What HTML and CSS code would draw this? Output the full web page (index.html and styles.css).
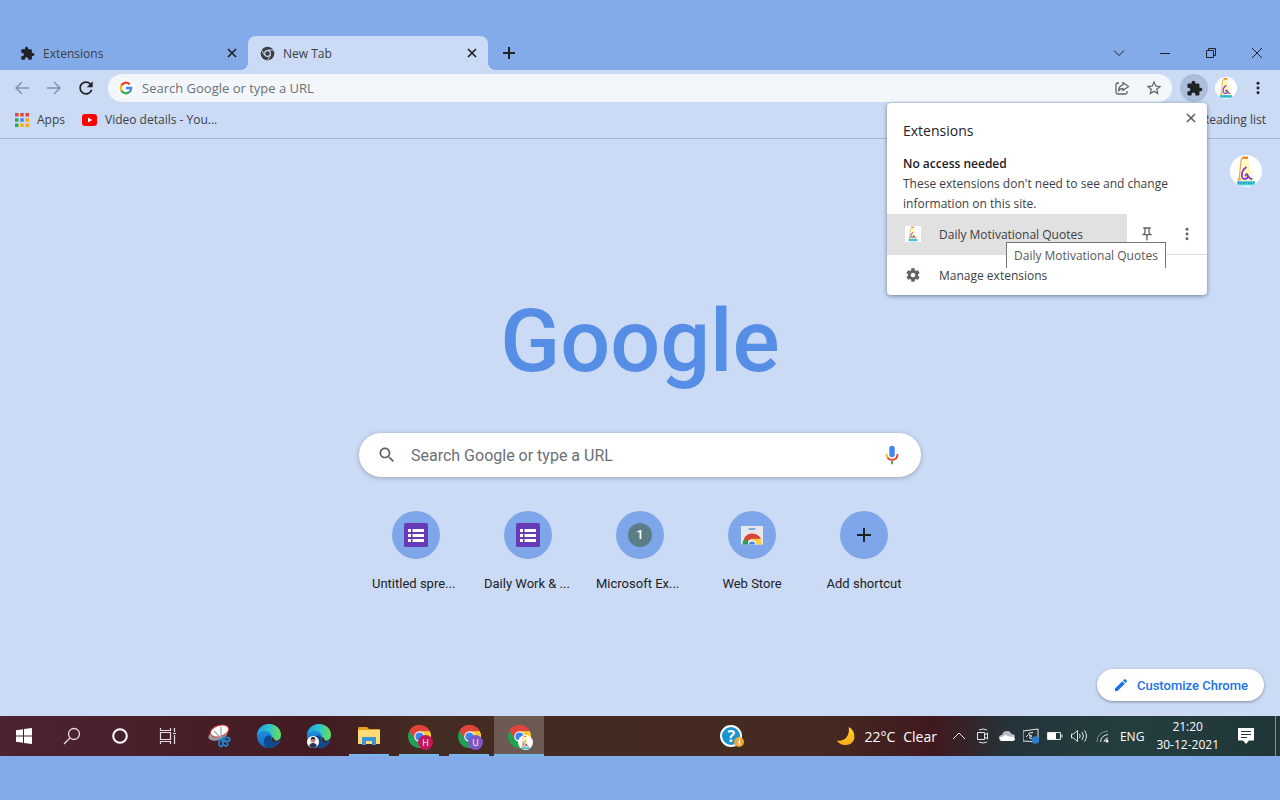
FILE: index.html
```html
<!DOCTYPE html>
<html lang="en">
<head>
    <meta charset="UTF-8">
    <meta name="viewport" content="width=device-width, initial-scale=1.0">
    <title>New Tab</title>
    <link rel="stylesheet" href="styles.css">
</head>
<body>
    <!-- Shared icons -->
    <svg class="sprite" width="0" height="0" aria-hidden="true">
        <defs>
            <linearGradient id="edgeTop" x1="0" y1="0" x2="1" y2="0">
                <stop offset="0" stop-color="#1a9fe0"/>
                <stop offset=".5" stop-color="#2fc3cf"/>
                <stop offset="1" stop-color="#6be04e"/>
            </linearGradient>
            <linearGradient id="edgeSide" x1="0" y1="0" x2="0" y2="1">
                <stop offset="0" stop-color="#2a9be8"/>
                <stop offset="1" stop-color="#0f6cc4"/>
            </linearGradient>
            <linearGradient id="moonFill" x1="0" y1="0" x2="0" y2="1">
                <stop offset="0" stop-color="#ffd91f"/>
                <stop offset="1" stop-color="#f9a91c"/>
            </linearGradient>
        </defs>
        <symbol id="puzzle" viewBox="0 0 24 24">
            <path d="M20.5 11H19V7c0-1.1-.9-2-2-2h-4V3.5C13 2.12 11.88 1 10.5 1S8 2.12 8 3.5V5H4c-1.1 0-1.99.9-1.99 2v3.8H3.5c1.49 0 2.7 1.21 2.7 2.7s-1.21 2.7-2.7 2.7H2V20c0 1.1.9 2 2 2h3.8v-1.5c0-1.49 1.21-2.7 2.7-2.7s2.7 1.21 2.7 2.7V22H17c1.1 0 2-.9 2-2v-4h1.5c1.38 0 2.5-1.12 2.5-2.5S21.88 11 20.5 11z"/>
        </symbol>
        <symbol id="cross" viewBox="0 0 10 10">
            <path d="M1 1l8 8M9 1L1 9" fill="none" stroke="currentColor" stroke-width="1.7"/>
        </symbol>
        <symbol id="dots" viewBox="0 0 4 16">
            <circle cx="2" cy="2.5" r="1.7"/><circle cx="2" cy="8" r="1.7"/><circle cx="2" cy="13.5" r="1.7"/>
        </symbol>
        <symbol id="lamp" viewBox="0 0 32 32">
            <path d="M14 4L9.500 26H23L18 4z" fill="#fdfbb5"/>
            <path d="M9 26l2-20q.5-3 3-3.500" fill="none" stroke="#f6a544" stroke-width="1.300"/>
            <path d="M12.500 1.500h5.500v2.500h-5z" fill="#ee8b24"/>
            <path d="M7 25l2.500-3 2 3z" fill="#f6a544"/>
            <path d="M16 12.500c-3 1.500-5 6-4 9.500 1.500 3.500 6 2 6-1 0-2-2.500-2-2.500-.5M17 19q2 4.500 4.500 5" fill="none" stroke="#7f35dc" stroke-width="1.800" stroke-linecap="round"/>
            <path d="M7 26h18v4.500H7z" fill="#58cfe0"/>
            <path d="M8 28h16" stroke="#269fbd" stroke-width="2" stroke-dasharray="1.500 1"/>
        </symbol>
        <symbol id="chrome" viewBox="0 0 24 24">
            <path d="M12 12L1.610 6A12 12 0 0 1 22.390 6z" fill="#e0443a"/>
            <path d="M12 12L22.390 6A12 12 0 0 1 12 24z" fill="#fccb32"/>
            <path d="M12 12V24A12 12 0 0 1 1.610 6z" fill="#21a053"/>
            <path d="M12 6.500H22.660A12 12 0 0 0 1.610 6L7.200 14.700z" fill="#e0443a"/>
            <path d="M16.800 14.700L12 24A12 12 0 0 0 22.660 6.500H12z" fill="#fccb32"/>
            <circle cx="12" cy="12" r="5.500" fill="#fff"/>
            <circle cx="12" cy="12" r="4.300" fill="#3f83f1"/>
        </symbol>
        <symbol id="edge" viewBox="0 0 24 24">
            <circle cx="12" cy="12" r="12" fill="url(#edgeSide)"/>
            <path d="M0 12C0 5 5 0 12 0c7 0 12 5 12 11 0 4-3 6-6 6-2.500 0-4-1-3.500-2.500C16 11 13 7 8.500 7 4 7 1 9 0 12z" fill="url(#edgeTop)"/>
            <path d="M14.500 14.500c-1.500 3 4 4.500 8 2.500C20 22 15.500 24.500 11.500 24 6 23 5.500 15 9.500 12c2-1.500 5-.5 5 2.500z" fill="#104a8e"/>
            <path d="M14.500 14.500C13.500 18 19 19.500 23 16.600 24 15 24 12 24 11c0 4-3 6-6 6-2.500 0-4-1-3.500-2.500z" fill="#432027"/>
            <path d="M14.600 12.500c.8 1-.3 2-.1 3 .6 2 4.500 2 6.500.800-2 .8-4-.1-4-1.800z" fill="#432027"/>
        </symbol>
        <symbol id="form" viewBox="0 0 24 24">
            <rect width="24" height="24" rx="1.500" fill="#673ab7"/>
            <path d="M4 6h3v3H4zm4.500 0H20v3H8.500zM4 11h3v3H4zm4.500 0H20v3H8.500zM4 16h3v3H4zm4.500 0H20v3H8.500z" fill="#fff"/>
        </symbol>
    </svg>

    <div class="browser">
        <div class="tab-strip">
            <div class="tab">
                <svg class="tab-icon" viewBox="0 0 24 24"><use href="#puzzle"/></svg>
                <span class="tab-title">Extensions</span>
                <button class="icon-button" aria-label="Close Extensions"><svg width="10" height="10"><use href="#cross"/></svg></button>
            </div>
            <div class="tab active">
                <svg class="tab-icon" viewBox="0 0 24 24">
                    <circle cx="12" cy="12" r="11" fill="#3c4043"/>
                    <path d="M12 6.500h10M7.200 14.800L2 6M16.800 14.800L12 23" stroke="#cbdbf5" stroke-width="1.500"/>
                    <circle cx="12" cy="12" r="5.500" fill="#cbdbf5"/>
                    <circle cx="12" cy="12" r="3.700" fill="#3c4043"/>
                </svg>
                <span class="tab-title">New Tab</span>
                <button class="icon-button" aria-label="Close New Tab"><svg width="10" height="10"><use href="#cross"/></svg></button>
            </div>
            <button class="icon-button new-tab" aria-label="New tab">
                <svg width="12" height="12" viewBox="0 0 12 12"><path d="M6 0v12M0 6h12" stroke="currentColor" stroke-width="2"/></svg>
            </button>
            <div class="window-controls">
                <button class="icon-button" aria-label="Search tabs"><svg width="12" height="12" viewBox="0 0 12 12"><path d="M1 3.500l5 5 5-5" fill="none" stroke="currentColor"/></svg></button>
                <button class="icon-button" aria-label="Minimize"><svg width="12" height="12" viewBox="0 0 12 12"><path d="M1 6.500h10" stroke="currentColor"/></svg></button>
                <button class="icon-button" aria-label="Restore"><svg width="12" height="12" viewBox="0 0 12 12"><path d="M1.500 3.500h7v7h-7zM3.500 3.500v-2h7v7h-2" fill="none" stroke="currentColor"/></svg></button>
                <button class="icon-button" aria-label="Close"><svg width="12" height="12" viewBox="0 0 12 12"><path d="M1 1l10 10M11 1L1 11" stroke="currentColor"/></svg></button>
            </div>
        </div>

        <div class="toolbar">
            <button class="icon-button muted" aria-label="Back"><svg width="16" height="16" viewBox="0 0 16 16"><path d="M15 8H2M8 2L2 8l6 6" fill="none" stroke="currentColor" stroke-width="1.500"/></svg></button>
            <button class="icon-button muted" aria-label="Forward"><svg width="16" height="16" viewBox="0 0 16 16"><path d="M1 8h13M8 2l6 6-6 6" fill="none" stroke="currentColor" stroke-width="1.500"/></svg></button>
            <button class="icon-button" aria-label="Reload"><svg width="20" height="20" viewBox="0 0 24 24"><path d="M17.650 6.350C16.200 4.900 14.210 4 12 4c-4.420 0-7.990 3.580-7.990 8s3.570 8 7.990 8c3.730 0 6.840-2.550 7.730-6h-2.080c-.82 2.330-3.040 4-5.650 4-3.310 0-6-2.690-6-6s2.690-6 6-6c1.660 0 3.140.69 4.220 1.780L13 11h7V4z"/></svg></button>
            <div class="omnibox">
                <svg width="18" height="18" viewBox="0 0 18 18">
                    <circle cx="9" cy="9" r="9" fill="#fff"/>
                    <g fill="none" stroke-width="2.300">
                        <path d="M4.300 6.600A5.200 5.200 0 0 1 12.700 5.300" stroke="#ea4335"/>
                        <path d="M4.300 11.400A5.200 5.200 0 0 1 4.300 6.600" stroke="#fbbc05"/>
                        <path d="M12.500 12.900A5.200 5.200 0 0 1 4.300 11.400" stroke="#34a853"/>
                        <path d="M9 9h5.200A5.200 5.200 0 0 1 12.500 12.900" stroke="#4285f4"/>
                    </g>
                </svg>
                <input type="text" aria-label="Address and search bar" placeholder="Search Google or type a URL">
                <button class="icon-button grey" aria-label="Share"><svg width="16" height="16" viewBox="0 0 16 16"><path d="M5 3H3.500Q2 3 2 4.500v8Q2 14 3.500 14h8q1.500 0 1.500-1.500V11M9 2.500L14.500 6.500 9 10.500V8.500Q6 8.500 4.500 11 5 5.500 9 4.800z" fill="none" stroke="currentColor" stroke-width="1.300" stroke-linejoin="round"/></svg></button>
                <button class="icon-button grey" aria-label="Bookmark this tab"><svg width="18" height="18" viewBox="0 0 24 24"><path d="M22 9.240l-7.190-.62L12 2 9.190 8.630 2 9.240l5.460 4.730L5.820 21 12 17.270 18.180 21l-1.630-7.030zM12 15.400l-3.760 2.270 1-4.280-3.320-2.880 4.380-.38L12 6.100l1.710 4.040 4.380.38-3.320 2.880 1 4.280z"/></svg></button>
            </div>
            <button class="icon-button pressed" aria-label="Extensions"><svg width="17" height="17"><use href="#puzzle"/></svg></button>
            <button class="icon-button avatar" aria-label="Profile"><svg width="22" height="22"><use href="#lamp"/></svg></button>
            <button class="icon-button" aria-label="Menu"><svg width="4" height="14"><use href="#dots"/></svg></button>
        </div>

        <nav class="bookmarks">
            <a href="#">
                <svg width="14" height="14" viewBox="0 0 14 14">
                    <path d="M0 0h3.500v3.500H0zM5.250 0h3.500v3.500h-3.500zM10.500 0H14v3.500h-3.500z" fill="#ea4335"/>
                    <path d="M0 5.250h3.500v3.500H0zM0 10.500h3.500V14H0z" fill="#34a853"/>
                    <path d="M5.250 5.250h3.500v3.500h-3.500z" fill="#4285f4"/>
                    <path d="M10.500 5.250H14v3.500h-3.500zM5.250 10.500h3.500V14h-3.500zM10.500 10.500H14V14h-3.500z" fill="#fbab05"/>
                </svg>
                Apps
            </a>
            <a href="#">
                <svg width="15" height="12" viewBox="0 0 15 12"><rect width="15" height="12" rx="3" fill="#f00"/><path d="M6 3.500v5L10.200 6z" fill="#fff"/></svg>
                Video details - You...
            </a>
            <a class="reading-list" href="#">Reading list</a>
        </nav>

        <main class="new-tab-page">
            <button class="icon-button account" aria-label="Account"><svg width="32" height="32"><use href="#lamp"/></svg></button>
            <h1 class="logo">Google</h1>
            <div class="search-box">
                <svg width="20" height="20" viewBox="0 0 24 24" fill="#5f6368"><path d="M15.500 14h-.79l-.28-.27C15.410 12.590 16 11.110 16 9.500 16 5.910 13.090 3 9.500 3S3 5.910 3 9.500 5.910 16 9.500 16c1.610 0 3.090-.59 4.230-1.570l.27.28v.79l5 4.990L20.490 19zm-6 0C7.010 14 5 11.990 5 9.500S7.010 5 9.500 5 14 7.010 14 9.500 11.990 14 9.500 14z"/></svg>
                <input type="text" aria-label="Search" placeholder="Search Google or type a URL">
                <button class="icon-button" aria-label="Search by voice">
                    <svg width="22" height="22" viewBox="0 0 24 24">
                        <rect x="9" y="2" width="6" height="12.500" rx="3" fill="#4285f4"/>
                        <path d="M11 18h2v4h-2z" fill="#34a853"/>
                        <path d="M6 11q0 3.300 2 5" fill="none" stroke="#fbbc05" stroke-width="2"/>
                        <path d="M7.300 15.200Q9 17.300 12 17.300q6 0 6-6.300" fill="none" stroke="#ea4335" stroke-width="2"/>
                    </svg>
                </button>
            </div>
            <div class="shortcuts">
                <a class="shortcut" href="#">
                    <span class="shortcut-icon"><svg width="24" height="24"><use href="#form"/></svg></span>
                    <span class="cut">Untitled spre...</span>
                </a>
                <a class="shortcut" href="#">
                    <span class="shortcut-icon"><svg width="24" height="24"><use href="#form"/></svg></span>
                    <span class="cut">Daily Work &amp; ...</span>
                </a>
                <a class="shortcut" href="#">
                    <span class="shortcut-icon"><span class="letter-icon">1</span></span>
                    <span class="cut">Microsoft Ex...</span>
                </a>
                <a class="shortcut" href="#">
                    <span class="shortcut-icon">
                        <svg width="24" height="24" viewBox="0 0 24 24">
                            <path d="M1 3h22v18.500H1z" fill="#e6e7e9"/>
                            <rect x="8.500" y="5" width="7" height="2" rx="1" fill="#7da7ea"/>
                            <path d="M2.500 21.500a9.500 9.500 0 0 1 3-7l4.500 7z" fill="#21a053"/>
                            <path d="M4 15.500a9.500 9.500 0 0 1 17 .5h-9q-3 0-4.500 3z" fill="#db4437"/>
                            <path d="M12 15.800h8.500q1 2 1 5.700H13z" fill="#fdd04a"/>
                            <path d="M8 21.500a4 4 0 0 1 8 0z" fill="#fff"/>
                            <path d="M8.900 21.500a3.100 3.100 0 0 1 6.200 0z" fill="#4285f4"/>
                        </svg>
                    </span>
                    <span>Web Store</span>
                </a>
                <a class="shortcut" href="#">
                    <span class="shortcut-icon"><svg width="14" height="14" viewBox="0 0 14 14"><path d="M7 0v14M0 7h14" stroke="#202124" stroke-width="2"/></svg></span>
                    <span>Add shortcut</span>
                </a>
            </div>
            <button class="customize">
                <svg width="16" height="16" viewBox="0 0 24 24" fill="#1a73e8"><path d="M3 17.250V21h3.750L17.810 9.940l-3.750-3.750zM20.710 7.040c.39-.39.39-1.020 0-1.410l-2.340-2.340c-.39-.39-1.020-.39-1.410 0l-1.830 1.830 3.750 3.750z"/></svg>
                Customize Chrome
            </button>
        </main>

        <section class="popup">
            <button class="icon-button popup-close" aria-label="Close popup"><svg width="10" height="10"><use href="#cross"/></svg></button>
            <h2>Extensions</h2>
            <h3>No access needed</h3>
            <p>These extensions don't need to see and change information on this site.</p>
            <div class="extension-row">
                <button class="extension-name">
                    <svg class="extension-logo" width="16" height="16"><use href="#lamp"/></svg>
                    Daily Motivational Quotes
                </button>
                <button class="icon-button grey" aria-label="Pin"><svg width="16" height="16" viewBox="0 0 24 24"><path d="M14 4v5c0 1.120.37 2.160 1 3H9c.65-.86 1-1.900 1-3V4zm3-2H7c-.55 0-1 .45-1 1s.45 1 1 1h1v5c0 1.660-1.340 3-3 3v2h5.970v7l1 1 1-1v-7H19v-2c-1.660 0-3-1.340-3-3V4h1c.55 0 1-.45 1-1s-.45-1-1-1z"/></svg></button>
                <button class="icon-button grey" aria-label="More options"><svg width="4" height="14"><use href="#dots"/></svg></button>
                <span class="tooltip">Daily Motivational Quotes</span>
            </div>
            <button class="manage">
                <svg width="16" height="16" viewBox="0 0 24 24" fill="#5f6368"><path d="M19.430 12.980c.04-.32.07-.64.07-.98s-.03-.66-.07-.98l2.110-1.650c.19-.15.24-.42.12-.64l-2-3.460c-.12-.22-.39-.3-.61-.22l-2.490 1c-.52-.4-1.080-.73-1.690-.98l-.38-2.650C14.460 2.180 14.250 2 14 2h-4c-.25 0-.46.18-.49.42l-.38 2.650c-.61.25-1.170.59-1.690.98l-2.490-1c-.23-.09-.49 0-.61.22l-2 3.460c-.13.22-.07.49.12.64l2.110 1.650c-.04.32-.07.65-.07.98s.03.66.07.98l-2.110 1.650c-.19.15-.24.42-.12.64l2 3.460c.12.22.39.3.61.22l2.490-1c.52.4 1.080.73 1.690.98l.38 2.650c.03.24.24.42.49.42h4c.25 0 .46-.18.49-.42l.38-2.650c.61-.25 1.170-.59 1.690-.98l2.490 1c.23.09.49 0 .61-.22l2-3.460c.12-.22.07-.49-.12-.64zM12 15.500c-1.930 0-3.500-1.570-3.500-3.500s1.570-3.500 3.500-3.500 3.500 1.570 3.500 3.500-1.570 3.500-3.500 3.500z"/></svg>
                Manage extensions
            </button>
        </section>
    </div>

    <footer class="taskbar">
        <div class="system-buttons">
            <button aria-label="Start"><svg width="18" height="18" viewBox="0 0 18 18"><path d="M1 3.200l7-1v6.300H1zM9 2l8-1v7.500H9zM1 9.500h7v6.300l-7-1zM9 9.500h8V17l-8-1z" fill="#fff"/></svg></button>
            <button aria-label="Search"><svg width="18" height="18" viewBox="0 0 18 18"><g fill="none" stroke="#e8dde0" stroke-width="1.300"><circle cx="11" cy="7" r="5.500"/><path d="M7 11l-6 6"/></g></svg></button>
            <button aria-label="Cortana"><svg width="18" height="18" viewBox="0 0 18 18"><circle cx="9" cy="9" r="6.800" fill="none" stroke="#fff" stroke-width="2"/></svg></button>
            <button aria-label="Task view"><svg width="18" height="18" viewBox="0 0 18 18"><path d="M1.500 1v2.500h10V1M1.500 5.500h10v7h-10zM1.500 17v-2.500h10V17M15.500 1v4M15.500 8v9M14 6.500h3" fill="none" stroke="#e8dde0" stroke-width="1.200"/></svg></button>
        </div>
        <div class="apps">
            <button aria-label="Snip">
                <svg width="24" height="24" viewBox="0 0 24 24">
                    <ellipse cx="11" cy="11" rx="10" ry="5" transform="rotate(-18 11 11)" fill="#9a9a9e"/>
                    <ellipse cx="12.500" cy="7" rx="9.500" ry="5.500" transform="rotate(-18 12.500 7)" fill="#fff" stroke="#d93a3a"/>
                    <path d="M7 7l7 7M14 3v11" stroke="#9fa8b0" stroke-width="1.300"/>
                    <g fill="none" stroke="#237fc4" stroke-width="1.800"><ellipse cx="19" cy="15.500" rx="4" ry="2"/><ellipse cx="14" cy="19" rx="2" ry="3.500"/><ellipse cx="18" cy="19" rx="2" ry="3.300" transform="rotate(-35 18 19)"/></g>
                </svg>
            </button>
            <button aria-label="Edge"><svg width="24" height="24"><use href="#edge"/></svg></button>
            <button aria-label="Edge profile">
                <svg width="24" height="24" viewBox="0 0 24 24">
                    <use href="#edge"/>
                    <circle cx="6" cy="18" r="6" fill="#fff"/>
                    <path d="M2 22q1-3 4-3t4 3q-4 4-8 0z" fill="#29354d"/>
                    <circle cx="6" cy="16.500" r="2.300" fill="#b98a75"/><path d="M3.600 16q0-3 2.400-3t2.400 3q-2.400-2-4.800 0z" fill="#231f26"/>
                </svg>
            </button>
            <button class="running" aria-label="File Explorer">
                <svg width="24" height="24" viewBox="0 0 24 24">
                    <path d="M1 4q0-1 1-1h8l2 2h10q1 0 1 1v14H1z" fill="#e6a01f"/>
                    <path d="M1 6h22v13q0 1-1 1H2q-1 0-1-1z" fill="#ffdc73"/>
                    <path d="M5 21v-8h14v8h-4v-4H9v4z" fill="#3b94d9"/>
                </svg>
            </button>
            <button class="running" aria-label="Chrome H"><svg width="23" height="23"><use href="#chrome"/></svg><span class="profile-badge pink">H</span></button>
            <button class="running" aria-label="Chrome U"><svg width="23" height="23"><use href="#chrome"/></svg><span class="profile-badge purple">U</span></button>
            <button class="running current" aria-label="Chrome"><svg width="23" height="23"><use href="#chrome"/></svg><span class="profile-badge white"><svg width="15" height="15"><use href="#lamp"/></svg></span></button>
        </div>
        <button class="help" aria-label="Help">
            <span class="help-icon">?</span><span class="help-badge">i</span>
        </button>
        <div class="tray">
            <button class="weather">
                <svg width="20" height="20" viewBox="0 0 20 20"><path d="M12.500 1C21 5 20.500 19 10 19 5.500 19 2 17 1 14.500 9 16 14.500 9 12.500 1z" fill="url(#moonFill)"/></svg>
                <span>22°C</span><span>Clear</span>
            </button>
            <svg width="16" height="16" viewBox="0 0 16 16"><path d="M2 11l6-6 6 6" /></svg>
            <svg width="16" height="16" viewBox="0 0 16 16"><path d="M2.500 4.500h7v7h-7zM9.500 7l3-2v6l-3-2M4 2q4-2 8 0M4 14q4 2 8 0"/></svg>
            <svg width="16" height="16" viewBox="0 0 16 16"><path d="M4 12Q0 12 0 9.500 0 7 3 7q1-4 5-4 3.500 0 4.500 3Q16 6 16 9z" fill="#b9bdc0" stroke="none"/><path d="M3 13q-2.500 0-2.500-2T4 8.500q2-2 5-.5 3 1 4.500.5Q16 9 16 11t-2.500 2z" fill="#fff" stroke="none"/></svg>
            <svg width="16" height="16" viewBox="0 0 16 16"><path d="M0 3l15-2v13L0 13zM10 4.500L6 5v2l3 1-3 1.500 3 1.500M3 9l2-2"/><circle cx="12.500" cy="12" r="3.700" fill="#2b7cd3" stroke="none"/></svg>
            <svg width="16" height="16" viewBox="0 0 16 16"><path d="M.5 4.500h13v7H.5zM15 6.500v3"/><path d="M1 5h8v6H1z" fill="#fff" stroke="none"/></svg>
            <svg width="16" height="16" viewBox="0 0 16 16"><path d="M.5 6h2l4-3.500v11L2.500 10h-2zM8.500 6q1.500 2 0 4M11 4q3 4 0 8M13.500 2.500q4 5.500 0 11"/></svg>
            <svg width="16" height="16" viewBox="0 0 16 16"><path d="M9 14q0-3 4-4M5.500 14Q6 7.500 13 6.500" stroke="#dfe4e4"/><path d="M2 14Q2 4 13 3" stroke="#7f8d8d"/><circle cx="12" cy="13" r="1.500" fill="#fff" stroke="none"/></svg>
            <span class="language">ENG</span>
            <time class="clock"><span>21:20</span><span>30-12-2021</span></time>
            <button class="notifications" aria-label="Notifications"><svg width="18" height="18" viewBox="0 0 18 18"><path d="M1 1h16v12.500h-5L9 17l-3-3.500H1z" fill="#fff" stroke="none"/><path d="M4 4.500h10M4 7.500h10M4 10.500h6" stroke="#243e40"/></svg></button>
        </div>
    </footer>
</body>
</html>
```
FILE: styles.css
```css
* {
    margin: 0;
    padding: 0;
    box-sizing: border-box;
}

body {
    font-family: 'Open Sans', 'Noto Sans', sans-serif;
    font-size: 12px;
    color: #3c4043;
    background: #84abe9;
    min-height: 100vh;
    padding: 36px 0 44px;
    display: flex;
    flex-direction: column;
}

button, input {
    font: inherit;
    color: inherit;
    border: none;
    background: none;
    outline: none;
}

a {
    color: inherit;
    text-decoration: none;
}

svg {
    display: block;
    flex-shrink: 0;
}

.sprite {
    position: absolute;
}

.icon-button {
    display: flex;
    align-items: center;
    justify-content: center;
    flex-shrink: 0;
    width: 28px;
    height: 28px;
    border-radius: 50%;
    color: #202124;
    fill: #202124;
}

.icon-button.muted {
    color: #8391ac;
}

.icon-button.grey {
    color: #5f6368;
    fill: #5f6368;
}

.browser {
    position: relative;
    flex: 1;
    display: flex;
    flex-direction: column;
}

/* Tabs */
.tab-strip {
    display: flex;
    align-items: center;
    height: 34px;
    padding-left: 8px;
}

.tab {
    display: flex;
    align-items: center;
    width: 240px;
    height: 34px;
    padding: 0 2px 0 12px;
}

.tab.active {
    position: relative;
    background: #cbdbf5;
    border-radius: 8px 8px 0 0;
}

.tab.active::before,
.tab.active::after {
    content: '';
    position: absolute;
    bottom: 0;
    width: 8px;
    height: 8px;
}

.tab.active::before {
    right: 100%;
    background: radial-gradient(circle at 0 0, transparent 8px, #cbdbf5 8px);
}

.tab.active::after {
    left: 100%;
    background: radial-gradient(circle at 100% 0, transparent 8px, #cbdbf5 8px);
}

.tab-icon {
    width: 15px;
    height: 15px;
    margin-right: 8px;
    fill: #202124;
}

.tab-title {
    flex: 1;
}

.new-tab {
    margin-left: 7px;
}

.window-controls {
    display: flex;
    gap: 18px;
    margin-left: auto;
    padding-right: 9px;
}

/* Toolbar */
.toolbar {
    display: flex;
    align-items: center;
    gap: 4px;
    height: 36px;
    padding: 0 8px;
    background: #cbdbf5;
}

.omnibox {
    flex: 1;
    display: flex;
    align-items: center;
    gap: 4px;
    height: 28px;
    margin: 0 4px;
    padding: 0 4px 0 9px;
    background: #f3f7fc;
    border-radius: 14px;
}

.omnibox input {
    flex: 1;
    min-width: 0;
    padding-left: 3px;
    font-size: 13px;
}

input::placeholder {
    color: #6c7075;
    opacity: 1;
}

.pressed {
    background: #acbedb;
}

.avatar,
.account {
    background: white;
    overflow: hidden;
}

.avatar {
    width: 22px;
    height: 22px;
    margin: 0 3px;
}

/* Bookmarks */
.bookmarks {
    display: flex;
    align-items: center;
    gap: 17px;
    height: 33px;
    padding: 0 14px 5px 15px;
    background: #cbdbf5;
    border-bottom: 1px solid #a5b7d5;
}

.bookmarks a {
    display: flex;
    align-items: center;
    gap: 8px;
}

.bookmarks .reading-list {
    margin-left: auto;
}

/* New tab page */
.new-tab-page {
    position: relative;
    flex: 1;
    display: flex;
    flex-direction: column;
    align-items: center;
    padding: 16px;
    background: #cbdbf5;
    font-family: Roboto, sans-serif;
}

.account {
    align-self: flex-end;
    width: 32px;
    height: 32px;
    margin-right: 2px;
}

.logo {
    margin: 86px 0 24px;
    font-size: 88px;
    line-height: 136px;
    font-weight: 500;
    color: #568ee6;
}

.search-box {
    display: flex;
    align-items: center;
    width: 100%;
    max-width: 562px;
    height: 44px;
    padding: 0 15px 0 18px;
    background: white;
    border-radius: 22px;
    box-shadow: 0 1px 5px rgba(60, 64, 67, 0.35);
}

.search-box input {
    flex: 1;
    min-width: 0;
    padding-left: 14px;
    font-size: 16px;
}

.shortcuts {
    display: flex;
    margin-top: 34px;
}

.shortcut {
    display: flex;
    flex-direction: column;
    align-items: center;
    gap: 17px;
    width: 112px;
    font-size: 13px;
    line-height: 16px;
    color: #202124;
}

.shortcut .cut {
    width: 88px;
}

.shortcut-icon {
    display: flex;
    align-items: center;
    justify-content: center;
    width: 48px;
    height: 48px;
    background: #7da7ea;
    border-radius: 50%;
}

.letter-icon {
    width: 24px;
    height: 24px;
    line-height: 24px;
    text-align: center;
    font-weight: 500;
    color: white;
    background: #5b7d86;
    border-radius: 50%;
}

.customize {
    position: absolute;
    right: 16px;
    bottom: 15px;
    display: flex;
    align-items: center;
    gap: 8px;
    height: 32px;
    padding: 0 16px;
    font-size: 13px;
    font-weight: 500;
    color: #1a73e8;
    background: white;
    border-radius: 16px;
    box-shadow: 0 1px 3px rgba(60, 64, 67, 0.5);
}

/* Extensions popup */
.popup {
    position: absolute;
    top: 67px;
    right: 73px;
    width: 320px;
    background: white;
    border-radius: 4px;
    box-shadow: 0 1px 4px rgba(50, 65, 95, 0.6);
}

.popup-close {
    position: absolute;
    top: 1px;
    right: 2px;
    color: #5f6368;
}

.popup h2 {
    padding: 17px 16px 0;
    font-size: 14px;
    line-height: 22px;
    font-weight: 400;
    color: #202124;
}

.popup h3 {
    padding: 12px 16px 0;
    font-size: 12px;
    line-height: 20px;
    font-weight: 600;
    color: #202124;
}

.popup p {
    padding: 0 16px;
    line-height: 20px;
}

.extension-row {
    position: relative;
    display: flex;
    align-items: center;
    gap: 12px;
    height: 41px;
    padding-right: 6px;
    border-bottom: 1px solid #dadce0;
}

.extension-name,
.manage {
    display: flex;
    align-items: center;
    gap: 18px;
    height: 40px;
    padding-left: 18px;
}

.extension-name {
    flex: 1;
    margin-right: -6px;
    background: #e1e1e1;
}

.extension-logo {
    background: white;
}

.manage {
    width: 100%;
}

.tooltip {
    position: absolute;
    top: 28px;
    left: 119px;
    height: 26px;
    padding: 0 7px;
    line-height: 25px;
    white-space: nowrap;
    color: #575757;
    background: white;
    border: 1px solid #767676;
    border-bottom: none;
}

/* Taskbar */
.taskbar {
    display: flex;
    height: 40px;
    color: white;
    background: linear-gradient(90deg, #4b2430 0%, #421b22 25%, #432c22 33%, #452a21 64%, #40191f 73%, #24343a 79%, #243e40 88%, #203638 100%);
}

.system-buttons,
.apps {
    display: flex;
}

.system-buttons button,
.apps button {
    position: relative;
    display: flex;
    align-items: center;
    justify-content: center;
    width: 48px;
    height: 40px;
}

.apps {
    padding-left: 2px;
}

.apps button {
    width: 50px;
}

.running::after {
    content: '';
    position: absolute;
    left: 5px;
    right: 5px;
    bottom: 0;
    height: 2px;
    background: #76b9ed;
}

.apps .current {
    background: #6b5952;
}

.current::after {
    left: 0;
    right: 0;
}

.profile-badge {
    position: absolute;
    top: 19px;
    left: 24px;
    width: 15px;
    height: 15px;
    line-height: 15px;
    font-size: 9px;
    text-align: center;
    border-radius: 50%;
    overflow: hidden;
}

.profile-badge.pink {
    background: #c2185b;
}

.profile-badge.purple {
    background: #7e57c2;
}

.profile-badge.white {
    background: white;
}

.help {
    position: relative;
    width: 24px;
    margin: 0 92px 0 auto;
}

.help-icon {
    display: block;
    width: 22px;
    height: 22px;
    line-height: 18px;
    font-size: 16px;
    font-weight: 700;
    background: #1695d3;
    border: 2px solid white;
    border-radius: 50%;
}

.help-badge {
    position: absolute;
    right: 0;
    bottom: 9px;
    width: 10px;
    height: 10px;
    line-height: 10px;
    font-size: 9px;
    font-weight: 700;
    background: #f0a52c;
    border-radius: 50%;
}

.tray {
    display: flex;
    align-items: center;
    gap: 8px;
    padding-right: 4px;
}

.tray > svg {
    fill: none;
    stroke: #e4e7e8;
}

.weather {
    display: flex;
    align-items: center;
    gap: 8px;
    margin-right: 6px;
    font-size: 14px;
}

.language {
    margin: 0 4px 0 1px;
}

.clock {
    display: flex;
    flex-direction: column;
    align-items: center;
    line-height: 18px;
}

.notifications {
    display: flex;
    align-items: center;
    height: 40px;
    margin-left: 10px;
    padding-right: 20px;
    border-right: 1px solid #829092;
}
```
